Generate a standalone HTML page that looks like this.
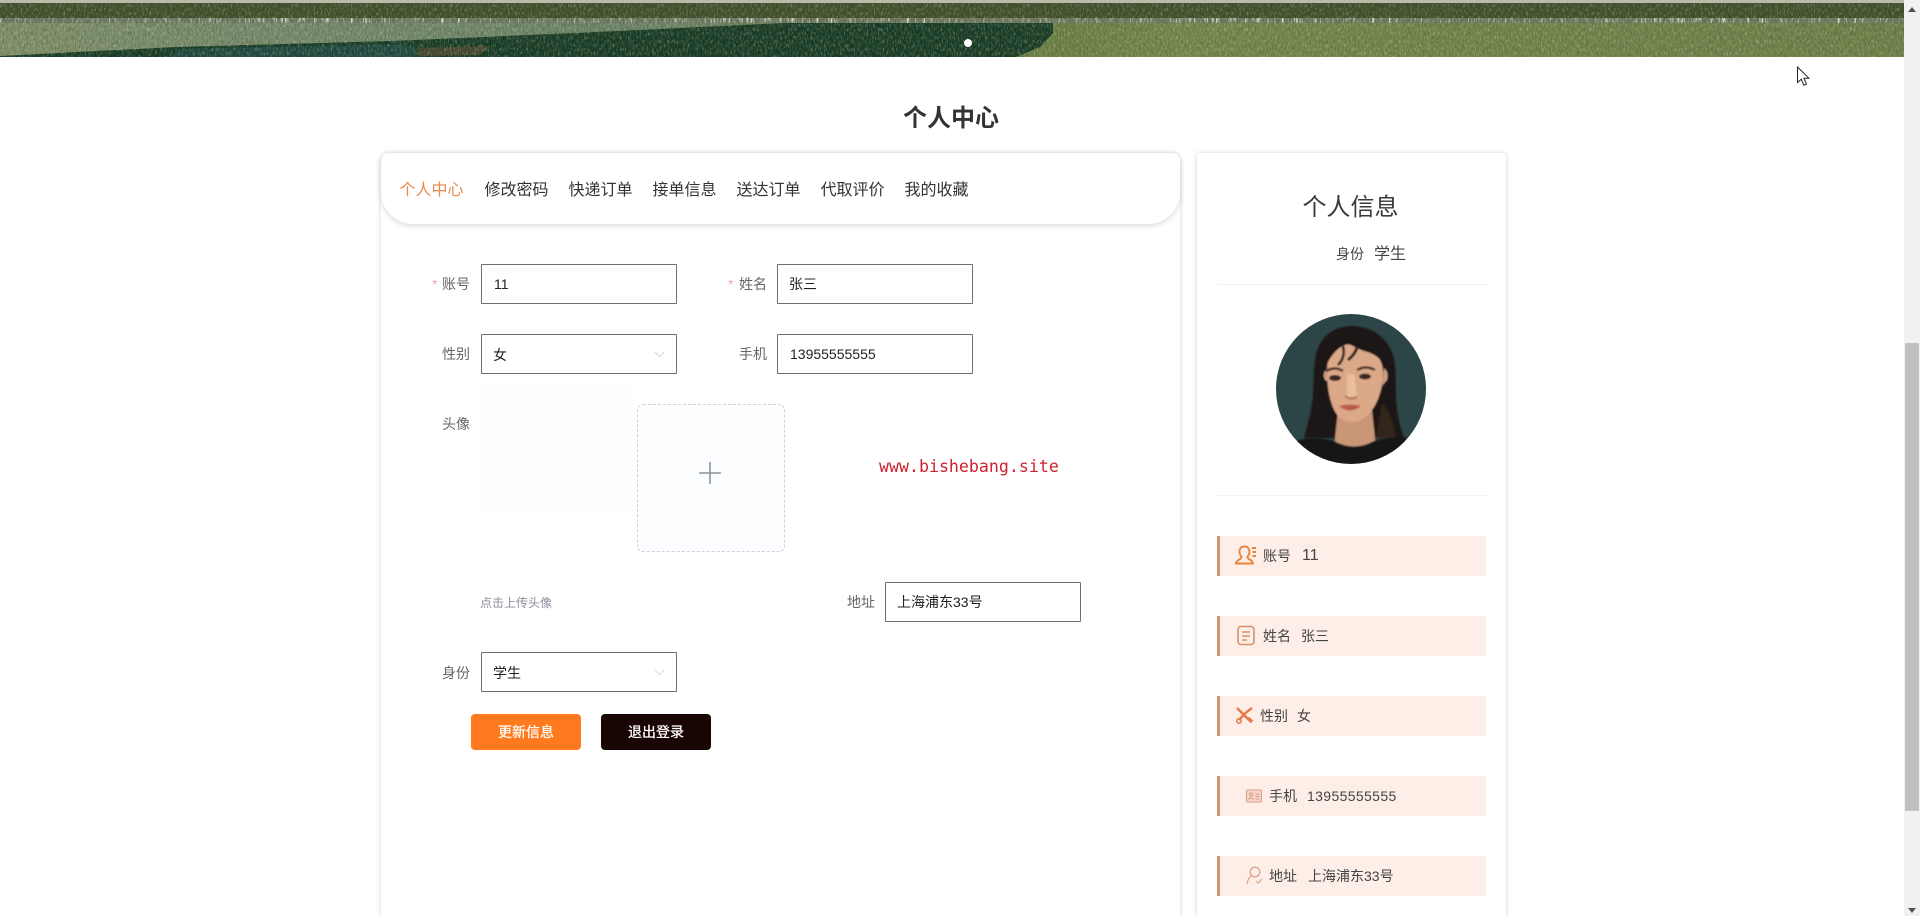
<!DOCTYPE html>
<html lang="zh-CN">
<head>
<meta charset="utf-8">
<title>个人中心</title>
<style>
html,body{margin:0;padding:0;width:1920px;height:916px;overflow:hidden;background:#fff}
body{position:relative;font-family:"Liberation Sans","Noto Sans CJK SC",sans-serif;color:#333}
.a,.t{position:absolute;box-sizing:border-box}
.t{white-space:nowrap;line-height:20px;font-size:14px}
.l{text-align:right;color:#666;width:70px}
.star{color:#f0a0a0;font-size:14px}
.i{position:absolute;box-sizing:border-box;width:196px;height:40px;background:#fff;border:1px solid #6e6e6e;border-radius:1px}
.v{color:#222}
.row{position:absolute;left:1217px;width:269px;height:40px;background:#fdeee8;border-left:3px solid #c8986e;box-sizing:border-box}
.w{color:#444}
</style>
</head>
<body>
<!-- banner -->
<svg class="a" style="left:0;top:0" width="1904" height="57" viewBox="0 0 1904 57">
<defs>
<filter id="gd" x="0" y="0" width="100%" height="100%">
<feTurbulence type="fractalNoise" baseFrequency="0.6 0.22" numOctaves="2" seed="4"/>
<feColorMatrix values="0 0 0 0 0.08 0 0 0 0 0.12 0 0 0 0 0.05 2.600 0 0 0 -1.050"/>
</filter>
<filter id="gl" x="0" y="0" width="100%" height="100%">
<feTurbulence type="fractalNoise" baseFrequency="0.7 0.25" numOctaves="2" seed="11"/>
<feColorMatrix values="0 0 0 0 0.82 0 0 0 0 0.85 0 0 0 0 0.68 2.600 0 0 0 -1.300"/>
</filter>
<filter id="fence" x="0" y="0" width="100%" height="100%">
<feTurbulence type="fractalNoise" baseFrequency="0.55 0.08" numOctaves="2" seed="7"/>
<feColorMatrix values="0 0 0 0 0.93 0 0 0 0 0.93 0 0 0 0 0.88 4 0 0 0 -2.200"/>
</filter>
<linearGradient id="gr" x1="0" x2="1" y1="0" y2="0">
<stop offset="0" stop-color="#82926c"/><stop offset=".15" stop-color="#788c6f"/><stop offset=".34" stop-color="#6e856b"/>
<stop offset=".56" stop-color="#6f8246"/><stop offset=".62" stop-color="#77894c"/><stop offset="1" stop-color="#6f8349"/>
</linearGradient>
</defs>
<rect width="1904" height="57" fill="url(#gr)"/>
<rect width="1904" height="3" fill="#b9bcaa"/>
<rect y="3" width="1904" height="15" fill="#404d2a"/>
<rect y="18" width="1904" height="5" fill="#6d7860"/>
<polygon points="0,56 175,47 392,41 575,33 640,30 784,23 1053,23 1053,33 1040,47 1016,57 0,57" fill="#133824"/>
<polygon points="175,49 400,44 416,47 416,57 175,57" fill="#1b4540"/>
<polygon points="416,48 490,46 480,55 420,56" fill="#44452e"/>
<rect y="3" width="1904" height="54" filter="url(#gd)" opacity=".55"/>
<rect y="3" width="1904" height="54" filter="url(#gl)" opacity=".35"/>
<rect y="18" width="1904" height="5" filter="url(#fence)" opacity=".8"/>
<circle cx="968" cy="43" r="4" fill="#fff"/>
</svg>

<!-- title -->
<div class="t" style="left:903px;top:104px;width:96px;line-height:30px;font-size:24px;font-weight:700;color:#333;text-align:center">个人中心</div>

<!-- left card -->
<div class="a" style="left:381px;top:153px;width:799px;height:780px;background:#fff;box-shadow:0 0 6px rgba(0,0,0,.16);border-radius:8px 8px 0 0"></div>
<div class="a" style="left:381px;top:153px;width:799px;height:71px;background:#fff;border-radius:8px 8px 32px 32px;box-shadow:0 2px 6px rgba(0,0,0,.14)"></div>
<div class="t" style="left:399.500px;top:181px;font-size:16px;color:#e98a4c">个人中心</div>
<div class="t" style="left:484.500px;top:181px;font-size:16px">修改密码</div>
<div class="t" style="left:568.500px;top:181px;font-size:16px">快递订单</div>
<div class="t" style="left:652.500px;top:181px;font-size:16px">接单信息</div>
<div class="t" style="left:736.500px;top:181px;font-size:16px">送达订单</div>
<div class="t" style="left:820.500px;top:181px;font-size:16px">代取评价</div>
<div class="t" style="left:904.500px;top:181px;font-size:16px">我的收藏</div>

<!-- form -->
<div class="t star" style="left:432px;top:274px">*</div>
<div class="t l" style="left:400px;top:274px">账号</div>
<div class="i" style="left:481px;top:264px"></div>
<div class="t v" style="left:494px;top:274px">11</div>

<div class="t star" style="left:728px;top:274px">*</div>
<div class="t l" style="left:697px;top:274px">姓名</div>
<div class="i" style="left:777px;top:264px"></div>
<div class="t v" style="left:789px;top:274px">张三</div>

<div class="t l" style="left:400px;top:344px">性别</div>
<div class="i" style="left:481px;top:334px"></div>
<div class="t v" style="left:493px;top:345px">女</div>
<svg class="a" style="left:654px;top:351px" width="11" height="7" viewBox="0 0 11 7"><path d="M1 1l4.500 4.500L10 1" fill="none" stroke="#d8d8d8" stroke-width="1"/></svg>

<div class="t l" style="left:697px;top:344px">手机</div>
<div class="i" style="left:777px;top:334px"></div>
<div class="t v" style="left:790px;top:344px">13955555555</div>

<div class="t l" style="left:400px;top:414px">头像</div>
<div class="a" style="left:481px;top:385px;width:155px;height:130px;background:#fefefe"></div>
<div class="a" style="left:637px;top:404px;width:148px;height:148px;background:#fbfdff;border:1px dashed #cfd2d6;border-radius:6px"></div>
<svg class="a" style="left:697px;top:460px" width="26" height="26" viewBox="0 0 26 26"><path d="M13 2v22M2 13h22" stroke="#8c939d" stroke-width="1.600" fill="none"/></svg>
<div class="t" style="left:879px;top:455px;line-height:24px;font-family:'DejaVu Sans Mono','Liberation Mono',monospace;font-size:16.600px;color:#d0202e">www.bishebang.site</div>

<div class="t" style="left:480px;top:593px;font-size:12px;color:#8a8f99">点击上传头像</div>
<div class="t l" style="left:805px;top:592px">地址</div>
<div class="i" style="left:885px;top:582px"></div>
<div class="t v" style="left:897px;top:592px">上海浦东33号</div>

<div class="t l" style="left:400px;top:663px">身份</div>
<div class="i" style="left:481px;top:652px"></div>
<div class="t v" style="left:493px;top:663px">学生</div>
<svg class="a" style="left:654px;top:669px" width="11" height="7" viewBox="0 0 11 7"><path d="M1 1l4.500 4.500L10 1" fill="none" stroke="#d8d8d8" stroke-width="1"/></svg>

<div class="a" style="left:471px;top:714px;width:110px;height:36px;background:#ff7a1f;border-radius:4px"></div>
<div class="t" style="left:471px;top:722px;width:110px;text-align:center;color:#fff;-webkit-text-stroke:.25px #fff">更新信息</div>
<div class="a" style="left:601px;top:714px;width:110px;height:36px;background:#1a0505;border-radius:4px"></div>
<div class="t" style="left:601px;top:722px;width:110px;text-align:center;color:#fff;-webkit-text-stroke:.25px #fff">退出登录</div>

<!-- right card -->
<div class="a" style="left:1197px;top:153px;width:309px;height:780px;background:#fff;box-shadow:0 0 5px rgba(0,0,0,.18);border-radius:3px 3px 0 0"></div>
<div class="t" style="left:1302px;top:193px;width:97px;line-height:30px;font-size:24px;text-align:center;color:#3a3a3a">个人信息</div>
<div class="t" style="left:1336px;top:244px;color:#444">身份</div>
<div class="t" style="left:1374px;top:245px;font-size:16px;color:#444">学生</div>
<div class="a" style="left:1217px;top:284px;width:271px;height:1px;background:#f3f3f3"></div>
<div class="a" style="left:1217px;top:495px;width:271px;height:1px;background:#f3f3f3"></div>

<!-- avatar -->
<svg class="a" style="left:1276px;top:314px" width="150" height="150" viewBox="0 0 150 150">
<defs>
<clipPath id="c"><circle cx="75" cy="75" r="75"/></clipPath>
<filter id="b"><feGaussianBlur stdDeviation="0.900"/></filter>
</defs>
<g clip-path="url(#c)">
<rect width="150" height="150" fill="#2c4546"/>
<g filter="url(#b)">
<path d="M76 12C56 12 42 24 39 46C37 62 38 76 36 90C34 104 30 114 28 124L128 124C124 112 121 100 120 85C119 66 122 50 114 34C107 20 92 12 76 12Z" fill="#1e1715"/>
<path d="M106 90C114 96 118 110 120 124L100 124Z" fill="#33261f"/>
<path d="M62 96H96L100 134H58Z" fill="#c99676"/>
<path d="M51 56C51 40 62 30 76 30C92 30 107 42 107 58C107 76 101 92 91 102C82 110 70 110 62 102C54 92 51 74 51 56Z" fill="#dba888"/>
<path d="M48 58C48 38 60 24 78 24C96 24 108 38 110 54C106 46 100 40 88 37C84 36 78 32 72 30C62 32 52 44 48 58Z" fill="#1e1715"/>
<path d="M67 32C69 40 67 46 62 51" stroke="#1e1715" stroke-width="2.500" fill="none"/>
<path d="M82 29C81 37 77 42 72 46" stroke="#1e1715" stroke-width="3" fill="none"/>
<path d="M50 56q-4 4 -1 10l4 2zM108 54q5 4 3 12l-5 6z" fill="#cf9f85"/>
<path d="M50 57q9 -5 17 0" stroke="#4c3026" stroke-width="2.400" fill="none"/>
<path d="M81 56q9 -5 18 0" stroke="#4c3026" stroke-width="2.400" fill="none"/>
<ellipse cx="59" cy="64" rx="6" ry="3" fill="#3a2820"/>
<ellipse cx="89" cy="62.500" rx="6" ry="3" fill="#3a2820"/>
<path d="M71 60l7 0 3 21 -10 2z" fill="#e9bf9e"/>
<path d="M69 82q6 5 12 1" fill="none" stroke="#a86f54" stroke-width="1.500"/>
<path d="M63 92q11 -3 22 0q-11 9 -22 0z" fill="#bb5d4e"/>
<path d="M15 150L22 126Q40 122 58 127Q78 138 98 127Q114 122 132 124L138 150Z" fill="#141212"/>
</g>
</g>
</svg>

<!-- info rows -->
<div class="row" style="top:536px"></div>
<svg class="a" style="left:1235px;top:545px" width="22" height="20" viewBox="0 0 22 20" fill="none" stroke="#e8853f" stroke-width="1.900">
<path d="M9 1.500c-3 0-4.500 2.500-4.500 5s1 4 2 5c.5 1.500-1 2.500-3 3.500C2 16 1 17 1 18.500h17c0-1.500-1-2.500-2.500-3.500-2-1-3.500-2-3-3.500 1-1 2-2.500 2-5s-2-5-4.500-5z"/>
<path d="M17 3h4M17.500 7h3.500M17.500 11h3.500"/>
</svg>
<div class="t w" style="left:1263px;top:546px">账号</div>
<div class="t w" style="left:1302px;top:546px;font-size:16px">11</div>

<div class="row" style="top:616px"></div>
<svg class="a" style="left:1236px;top:625px" width="20" height="21" viewBox="0 0 20 21" fill="none" stroke="#d9906a" stroke-width="1.600">
<rect x="2" y="1.500" width="16" height="18" rx="3"/>
<path d="M6 7h8M6 11h8M6 15h5"/>
</svg>
<div class="t w" style="left:1263px;top:626px">姓名</div>
<div class="t w" style="left:1301px;top:626px">张三</div>

<div class="row" style="top:696px"></div>
<svg class="a" style="left:1235px;top:706px" width="19" height="19" viewBox="0 0 19 19" fill="none" stroke="#e8794a" stroke-width="2.400">
<path d="M2 2l12 12"/><path d="M17 2l-6 4.500-7 7.500"/><circle cx="4" cy="15" r="2.200" stroke-width="1.500"/><path d="M13 12l4 4" stroke-width="3.600"/>
</svg>
<div class="t w" style="left:1260px;top:706px">性别</div>
<div class="t w" style="left:1297px;top:706px">女</div>

<div class="row" style="top:776px"></div>
<svg class="a" style="left:1246px;top:789px" width="16" height="14" viewBox="0 0 16 14" fill="#f6d5c8" stroke="#dc9a84" stroke-width="1">
<rect x=".5" y="1" width="15" height="12" rx="1"/>
<circle cx="5" cy="5.500" r="1.500" fill="none"/><path d="M2.500 10.500c.5-2 4.500-2 5 0" fill="none"/><path d="M9.500 5h4M9.500 7.500h4M9.500 10h4" fill="none"/>
</svg>
<div class="t w" style="left:1269px;top:786px">手机</div>
<div class="t w" style="left:1307px;top:786px;letter-spacing:.36px">13955555555</div>

<div class="row" style="top:856px"></div>
<svg class="a" style="left:1246px;top:866px" width="17" height="19" viewBox="0 0 17 19" fill="none" stroke="#e0a48c" stroke-width="1.300">
<circle cx="9" cy="6" r="4.800"/><path d="M5.500 10C3 11.500 1.500 14 1 18"/><path d="M10 15l2.500 2 3.500-4"/>
</svg>
<div class="t w" style="left:1269px;top:866px">地址</div>
<div class="t w" style="left:1308px;top:866px">上海浦东33号</div>

<!-- scrollbar -->
<div class="a" style="left:1904px;top:0;width:16px;height:916px;background:#f1f1f1"></div>
<div class="a" style="left:1905px;top:343px;width:14px;height:468px;background:#c1c1c1"></div>
<svg class="a" style="left:1904px;top:0" width="16" height="916" viewBox="0 0 16 916"><path d="M8 7l4 5H4zM8 913l4-5H4z" fill="#505050"/></svg>

<!-- cursor -->
<svg class="a" style="left:1796px;top:66px" width="14" height="21" viewBox="0 0 14 21"><path d="M1.500 1v15.500l3.700-3.300 2.600 6 2.700-1.100-2.600-5.900h5z" fill="#fff" stroke="#222" stroke-width="1"/></svg>
</body>
</html>
